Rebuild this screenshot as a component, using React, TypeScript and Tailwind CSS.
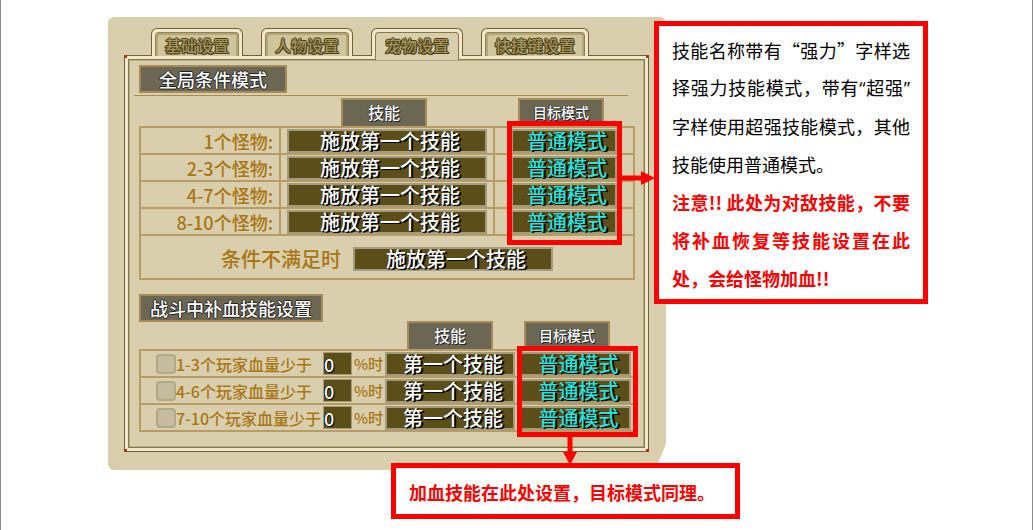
import { ReactNode } from 'react'
import clsx from 'clsx'

const tabs = ['基础设置', '人物设置', '宠物设置', '快捷键设置']
const activeTab = '宠物设置'

const enemyRows = ['1个怪物:', '2-3个怪物:', '4-7个怪物:', '8-10个怪物:']
const healRows = ['1-3个玩家血量少于', '4-6个玩家血量少于', '7-10个玩家血量少于']

function Tab({ label, active }: { label: string; active: boolean }) {
  return (
    <button
      type="button"
      role="tab"
      aria-selected={active}
      className={clsx(
        'relative h-7 rounded-t-md border border-b-0 border-[#6f6238] bg-[#f1e9c9] px-[3px] pt-[3px]',
        active &&
          "z-10 after:absolute after:inset-x-[3px] after:top-full after:h-1 after:border-x after:border-[#85794f] after:bg-[#d9cfac] after:content-['']"
      )}
    >
      <span
        className={clsx(
          'block h-6 rounded-t-sm border border-b-0 px-[9px] text-[16px] leading-6 font-medium text-[#a3955f] [text-shadow:1px_0_#4b3f16,-1px_0_#4b3f16,0_1px_#4b3f16,0_-1px_#4b3f16,1px_1px_#4b3f16,-1px_1px_#4b3f16]',
          active ? 'border-[#85794f] bg-[#d9cfac]' : 'border-[#8f8355] bg-[#cfc59c] shadow-[inset_2px_2px_0_#b3a876,inset_-2px_0_0_#b3a876]'
        )}
      >
        {label}
      </span>
    </button>
  )
}

function SectionTitle({ children }: { children: ReactNode }) {
  return (
    <h2 className="inline-block h-7 border-2 border-[#a48c5a] bg-[#6c6753] text-[18px] leading-6 font-medium text-white [text-shadow:1px_0_#222,-1px_0_#222,0_1px_#222,0_-1px_#222]">
      {children}
    </h2>
  )
}

function ColumnLabel({ children, small }: { children: ReactNode; small?: boolean }) {
  return (
    <span
      className={clsx(
        'block h-7 w-[86px] border-2 border-b-0 border-[#a48c5a] bg-[#6c6753] leading-6 font-medium text-white [text-shadow:1px_1px_#222,-1px_0_#333]',
        small ? 'text-[14px]' : 'text-[16px]'
      )}
    >
      {children}
    </span>
  )
}

function Field({ label, target }: { label: string; target?: boolean }) {
  return (
    <button
      type="button"
      className={clsx(
        'block h-6 w-full border-2 border-[#a39c7c] bg-[#5b4e19] pl-1.5 text-center text-[20px] leading-[18px] font-medium whitespace-nowrap [text-shadow:1px_1px_#000,2px_1px_#000]',
        target ? 'text-[#27e3d9]' : 'text-white'
      )}
    >
      {label}
    </button>
  )
}

function Corner({ className }: { className: string }) {
  return <span className={clsx('absolute size-[3px] bg-[#a5331c]', className)} />
}

export default function App() {
  return (
    <main className="min-h-screen border-x border-[#8a8a8a] bg-white pt-[17px] font-['Noto_Sans_CJK_SC',sans-serif]">
      <div className="relative ml-[107px] w-[54%] min-w-[558px]">
        <section className="rounded-md bg-[#d9cfac] pt-[11px] pr-[17px] pb-[18px] pl-4 [clip-path:polygon(0_0,100%_0,100%_calc(100%-26px),calc(100%-11px)_100%,0_100%)]">
          <div role="tablist" className="-mb-px flex gap-[18px] pl-[27px]">
            {tabs.map((tab) => (
              <Tab key={tab} label={tab} active={tab === activeTab} />
            ))}
          </div>

          <div className="rounded-xs border border-[#6f6238] shadow-[inset_0_0_0_3px_#f1e9c9,inset_0_0_0_4px_#85794f,inset_0_0_0_5px_#b8ad82]">
            <div className="relative pt-[9px] pr-[13px] pb-[19px] pl-[14px]">
              <Corner className="-top-px -left-px" />
              <Corner className="-top-px -right-px" />
              <Corner className="-bottom-px -left-px" />
              <Corner className="-right-px -bottom-px" />

              <div className="mr-[7px] -ml-[5px] flex border-b border-[#a88d50] pb-0.5 pl-[5px]">
                <SectionTitle>
                  <span className="px-[18px]">全局条件模式</span>
                </SectionTitle>
              </div>

              <div className="relative mt-0.5">
                <table className="w-full table-fixed border-collapse">
                  <thead>
                    <tr>
                      <th className="w-[140px] p-0" />
                      <th className="p-0 pr-1.5">
                        <div className="flex justify-center">
                          <ColumnLabel>技能</ColumnLabel>
                        </div>
                      </th>
                      <th className="w-[140px] p-0 pr-1.5">
                        <div className="flex justify-center">
                          <ColumnLabel small>目标模式</ColumnLabel>
                        </div>
                      </th>
                    </tr>
                  </thead>
                  <tbody>
                    {enemyRows.map((row) => (
                      <tr key={row} className="h-[27px]">
                        <td className="border-2 border-[#b79c66] p-0 pr-1.5 text-right text-[18px] leading-6 font-medium text-[#a87616]">
                          {row}
                        </td>
                        <td className="border-2 border-[#b79c66] px-1.5 py-0">
                          <Field label="施放第一个技能" />
                        </td>
                        <td className="border-2 border-[#b79c66] px-4 py-0">
                          <Field label="普通模式" target />
                        </td>
                      </tr>
                    ))}
                    <tr className="h-11">
                      <td colSpan={3} className="border-2 border-[#b79c66] p-0 pt-1">
                        <div className="flex items-center gap-3 pl-20">
                          <span className="text-[20px] leading-6 font-medium text-[#a87616]">条件不满足时</span>
                          <div className="w-[200px]">
                            <Field label="施放第一个技能" />
                          </div>
                        </div>
                      </td>
                    </tr>
                  </tbody>
                </table>

                <div className="pointer-events-none absolute top-[23px] right-[13px] h-[124px] w-[115px] border-5 border-[#fe0000]">
                  <svg className="absolute top-11 left-full ml-[5px] h-4 w-8" viewBox="0 0 32 16" fill="#fe0000">
                    <path d="M0 5.500h19V1l14 7-14 7v-4.500H0z" />
                  </svg>
                </div>
              </div>

              <div className="mt-[14px] flex">
                <SectionTitle>
                  <span className="px-[9px]">战斗中补血技能设置</span>
                </SectionTitle>
              </div>

              <div className="relative -mt-px">
                <table className="w-full table-fixed border-collapse">
                  <thead>
                    <tr>
                      <th className="p-0" />
                      <th className="w-[132px] p-0">
                        <div className="flex justify-center">
                          <ColumnLabel>技能</ColumnLabel>
                        </div>
                      </th>
                      <th className="w-[118px] p-0 pr-4">
                        <div className="flex justify-center">
                          <ColumnLabel small>目标模式</ColumnLabel>
                        </div>
                      </th>
                    </tr>
                  </thead>
                  <tbody>
                    {healRows.map((row, i) => (
                      <tr key={row} className="h-[27px] border-2 border-[#b79c66]">
                        <td className="p-0">
                          <div className="flex items-center pl-[15px] font-medium text-[#a87616]">
                            <input
                              id={`heal-${i}`}
                              type="checkbox"
                              className="size-5 shrink-0 appearance-none rounded-sm border-2 border-[#b0a888] bg-[#c5bc9b] checked:bg-[#5b4e19]"
                            />
                            <label htmlFor={`heal-${i}`} className="w-[147px] shrink-0 text-[16px] leading-5 whitespace-nowrap">
                              {row}
                            </label>
                            <input
                              type="text"
                              aria-label={row}
                              defaultValue="0"
                              className="h-[23px] w-[29px] shrink-0 border border-[#a39c7c] bg-[#5b4e19] text-[18px] leading-5 font-medium text-white [text-shadow:1px_1px_#000,-1px_0_#000]"
                            />
                            <span className="pl-0.5 text-[15px] leading-5 whitespace-nowrap">%时</span>
                          </div>
                        </td>
                        <td className="px-px py-0">
                          <Field label="第一个技能" />
                        </td>
                        <td className="py-0 pr-0.5 pl-1">
                          <Field label="普通模式" target />
                        </td>
                      </tr>
                    ))}
                  </tbody>
                </table>

                <div className="pointer-events-none absolute top-[25px] -right-[3px] h-[91px] w-[121px] border-5 border-[#fe0000]">
                  <svg className="absolute top-full left-10 mt-[5px] h-7 w-4" viewBox="0 0 16 28" fill="#fe0000">
                    <path d="M5.500 0v15H1l7 13 7-13h-4.500V0z" />
                  </svg>
                </div>
              </div>
            </div>
          </div>
        </section>

        <aside className="absolute top-1 left-full -ml-3 w-[274px] border-5 border-[#fe0000] bg-white px-[13px] pt-[5px] pb-0.5 text-[18px] leading-[38px] whitespace-nowrap text-black">
          <p className="[text-align-last:justify]">技能名称带有“强力”字样选</p>
          <p className="font-['Open_Sans','Noto_Sans_CJK_SC',sans-serif] [text-align-last:justify]">
            择强力技能模式，带有“超强”
          </p>
          <p className="[text-align-last:justify]">字样使用超强技能模式，其他</p>
          <p>技能使用普通模式。</p>
          <p className="font-bold text-[#fe0000] [text-align-last:justify]">注意!! 此处为对敌技能，不要</p>
          <p className="font-bold text-[#fe0000] [text-align-last:justify]">将补血恢复等技能设置在此</p>
          <p className="font-bold text-[#fe0000]">处，会给怪物加血!!</p>
        </aside>

        <aside className="absolute top-full -right-[74px] -mt-[7px] w-[349px] border-5 border-[#fe0000] bg-white px-[13px] pt-[5px] pb-[3px] text-[18px] leading-[38px] font-bold whitespace-nowrap text-[#fe0000]">
          加血技能在此处设置，目标模式同理。
        </aside>
      </div>
    </main>
  )
}
